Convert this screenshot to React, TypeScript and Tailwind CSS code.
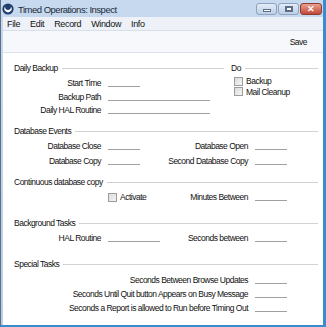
import React from 'react';

const Field = ({ className = 'w-[32px]' }: { className?: string }) => (
  <div className={`h-[8px] border-b border-[#a0a0a0] ${className}`} />
);

const Check = () => (
  <div className="h-[9px] w-[9px] border border-[#9c9c9c] bg-gradient-to-br from-[#dcdcdc] to-[#f4f4f4]" />
);

const Header = ({ title, className = '' }: { title: string; className?: string }) => (
  <div className={`flex h-[12px] items-center ${className}`}>
    <span>{title}</span>
    <div className="ml-[4px] h-px flex-1 bg-[#d2d2d2]" />
  </div>
);

// row with a label on the left and a label on the right (ends at x 249)
const PairRow = ({ left, leftField = 'w-[32px]', right, h = 'h-[15px]' }: { left: string; leftField?: string; right: string; h?: string }) => (
  <div className={`flex items-center ${h}`}>
    <div className="w-[98px] text-right">{left}</div>
    <div className="ml-[7px] flex w-[140px] items-center justify-between">
      <Field className={leftField} />
      <span>{right}</span>
    </div>
    <Field className="ml-[7px] w-[32px]" />
  </div>
);

const WideRow = ({ label, h = 'h-[14px]' }: { label: string; h?: string }) => (
  <div className={`flex items-center ${h}`}>
    <div className="w-[245px] text-right">{label}</div>
    <Field className="ml-[7px] w-[32px]" />
  </div>
);

const TitleButtons = () => (
  <div className="mr-[1px] mt-[3px] flex items-start gap-[1px]">
    <div className="flex h-[12px] w-[21px] items-center justify-center rounded-[3px] border border-[#8da3bf] bg-gradient-to-b from-[#e3ecf7] to-[#bccfe5]">
      <div className="mt-[3px] h-[3px] w-[8px] border border-[#5d6e84] bg-white" />
    </div>
    <div className="flex h-[12px] w-[21px] items-center justify-center rounded-[3px] border border-[#8da3bf] bg-gradient-to-b from-[#e3ecf7] to-[#bccfe5]">
      <div className="h-[6px] w-[8px] border-[2px] border-[#5d6e84] bg-white" />
    </div>
    <div className="flex h-[12px] w-[22px] items-center justify-center rounded-[3px] border border-[#8c3b2f] bg-gradient-to-b from-[#e7a08e] to-[#c4463a]">
      <span className="text-[9px] font-bold leading-none text-white">✕</span>
    </div>
  </div>
);

export default function App() {
  return (
    <div className="h-[327px] w-[326px] overflow-hidden font-['Liberation_Sans',Arial,sans-serif] text-[8.5px] leading-[12px] tracking-[-0.5px] text-[#111111]">
      <div className="flex h-full flex-col border-b-2 border-l border-r-[3px] border-b-[#3a8ccf] border-l-[#5d6f83] border-r-[#3a8ccf] bg-gradient-to-b from-[#c6d9ee] to-[#b9cfe7]">
        {/* title bar */}
        <div className="flex h-[17px] shrink-0 items-start">
          <svg className="ml-[1px] mt-[3px]" width="12" height="12" viewBox="0 0 12 12">
            <circle cx="6" cy="6" r="5.6" fill="#1f3d6b" />
            <path d="M3.2 3.4 A3.6 3.6 0 1 0 8.8 3.4 A2.9 2.9 0 1 1 3.2 3.4 Z" fill="#ffffff" />
          </svg>
          <span className="ml-[4px] mt-[4px] text-[9.5px] leading-[12px] text-[#1c2a3a]">Timed Operations: Inspect</span>
          <div className="flex-1" />
          <TitleButtons />
        </div>
        {/* body */}
        <div className="ml-[2px] flex flex-1 flex-col bg-white">
          <div className="flex h-[14px] shrink-0 items-center gap-[10px] border-b border-[#d9dfe7] bg-[#eef2f8] pl-[4px] text-[9px] tracking-[-0.35px]">
            <span>File</span>
            <span>Edit</span>
            <span>Record</span>
            <span>Window</span>
            <span>Info</span>
          </div>
          <div className="flex h-[22px] shrink-0 items-center justify-end border-b border-[#dde3ea] bg-[#f6f8fb] pr-[16px]">
            <span>Save</span>
          </div>

          <div className="flex flex-col pr-[5px]">
            {/* Daily Backup + Do */}
            <div className="mt-[9px] flex">
              <div className="flex w-[221px] flex-col">
                <Header title="Daily Backup" className="pl-[11px]" />
                <div className="mt-[2px] flex h-[14px] items-center">
                  <div className="w-[98px] text-right">Start Time</div>
                  <Field className="ml-[7px] w-[32px]" />
                </div>
                <div className="flex h-[13px] items-center">
                  <div className="w-[98px] text-right">Backup Path</div>
                  <Field className="ml-[7px] w-[102px]" />
                </div>
                <div className="flex h-[14px] items-center">
                  <div className="w-[98px] text-right">Daily HAL Routine</div>
                  <Field className="ml-[7px] w-[102px]" />
                </div>
              </div>
              <div className="ml-[7px] flex flex-1 flex-col">
                <Header title="Do" />
                <div className="mt-[2px] flex h-[10px] items-center gap-[3px] pl-[3px]">
                  <Check />
                  <span>Backup</span>
                </div>
                <div className="flex h-[11px] items-center gap-[3px] pl-[3px]">
                  <Check />
                  <span>Mail Cleanup</span>
                </div>
              </div>
            </div>

            {/* Database Events */}
            <Header title="Database Events" className="mt-[8px] pl-[11px]" />
            <div className="mt-[1px]">
              <PairRow left="Database Close" right="Database Open" />
              <PairRow left="Database Copy" right="Second Database Copy" />
            </div>

            {/* Continuous database copy */}
            <Header title="Continuous database copy" className="mt-[8px] pl-[11px]" />
            <div className="mt-[2px] flex h-[14px] items-center">
              <div className="w-[98px]" />
              <div className="ml-[7px] flex w-[140px] items-center justify-between">
                <div className="flex items-center gap-[3px]">
                  <Check />
                  <span>Activate</span>
                </div>
                <span>Minutes Between</span>
              </div>
              <Field className="ml-[7px] w-[32px]" />
            </div>

            {/* Background Tasks */}
            <Header title="Background Tasks" className="mt-[13px] pl-[11px]" />
            <div className="mt-[2px]">
              <PairRow left="HAL Routine" leftField="w-[52px]" right="Seconds between" h="h-[14px]" />
            </div>

            {/* Special Tasks */}
            <Header title="Special Tasks" className="mt-[13px] pl-[11px]" />
            <div className="mt-[3px]">
              <WideRow label="Seconds Between Browse Updates" />
              <WideRow label="Seconds Until Quit button Appears on Busy Message" />
              <WideRow label="Seconds a Report is allowed to Run before Timing Out" />
            </div>
          </div>
        </div>
      </div>
    </div>
  );
}
